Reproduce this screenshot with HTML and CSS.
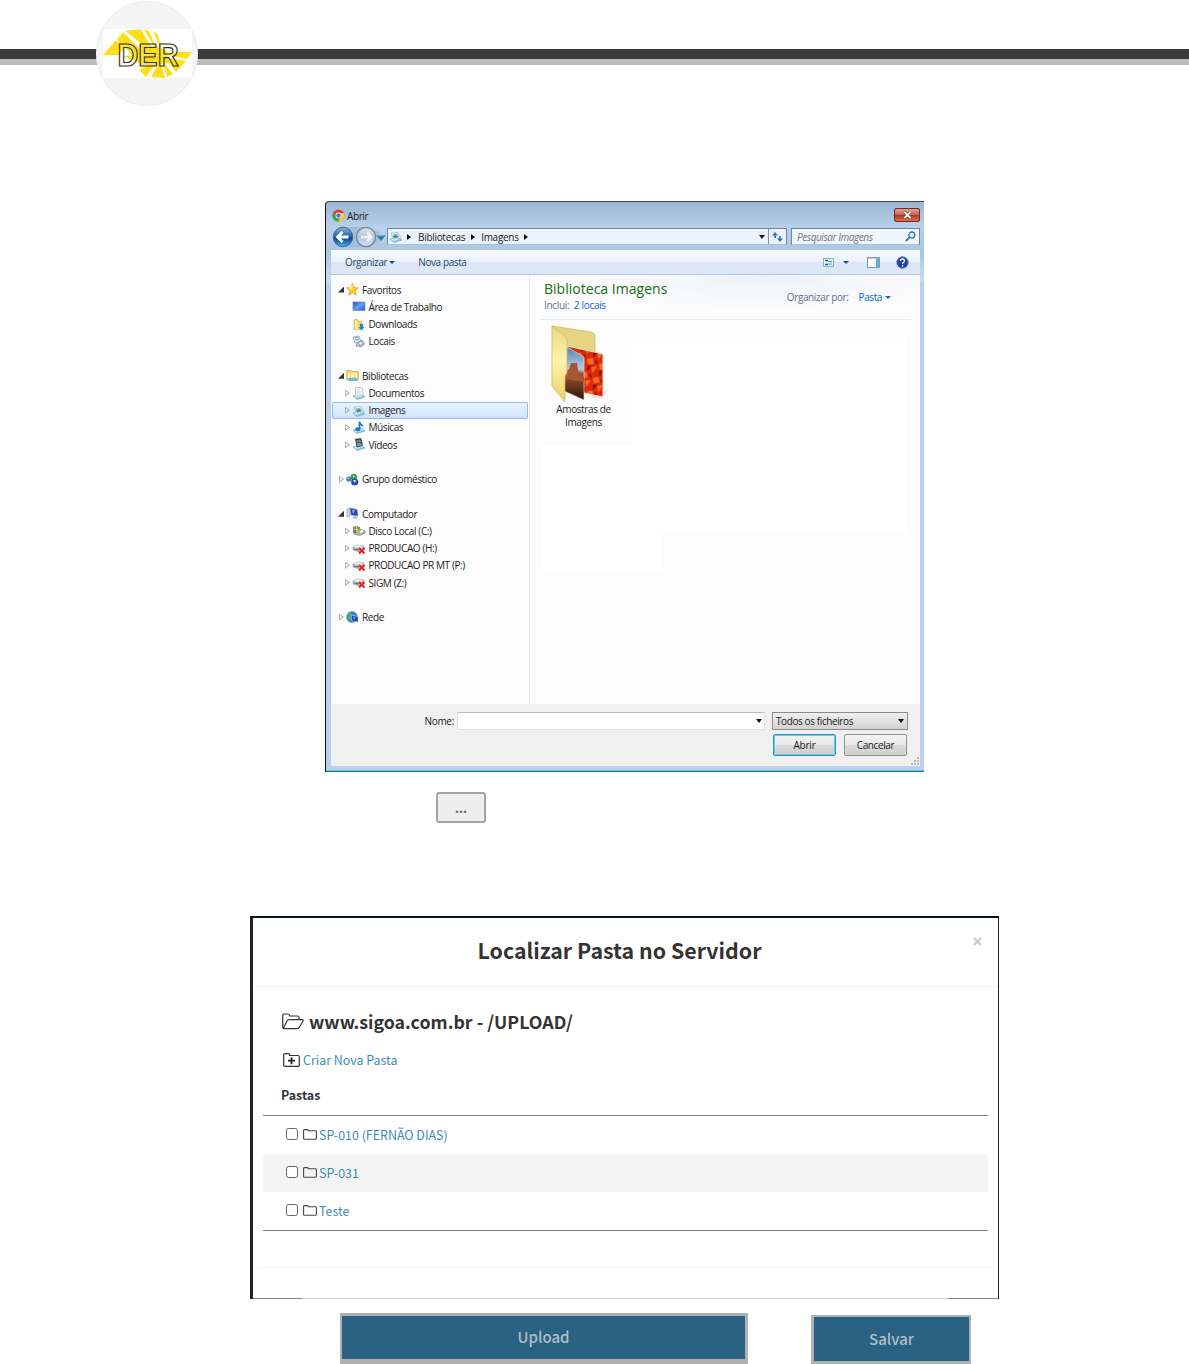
FILE: index.html
```html
<!DOCTYPE html>
<html lang="pt-BR">
<head>
<meta charset="utf-8">
<title>Localizar Pasta no Servidor</title>
<link rel="stylesheet" href="styles.css">
</head>
<body>
<svg class="defs" width="0" height="0">
  <defs>
    <linearGradient id="blueBall" x1="0" y1="0" x2="0" y2="1"><stop offset="0" stop-color="#8fb4de"/><stop offset=".5" stop-color="#1f5cae"/><stop offset=".55" stop-color="#0b3c8c"/><stop offset="1" stop-color="#49b4ee"/></linearGradient>
    <linearGradient id="greyBall" x1="0" y1="0" x2="0" y2="1"><stop offset="0" stop-color="#dfe8f1"/><stop offset=".5" stop-color="#b3c4d6"/><stop offset="1" stop-color="#d5e4f2"/></linearGradient>
    <linearGradient id="screen" x1="0" y1="0" x2="1" y2="1"><stop offset="0" stop-color="#1c48b8"/><stop offset=".5" stop-color="#6d9df0"/><stop offset="1" stop-color="#1d4fc0"/></linearGradient>
    <linearGradient id="flap" x1="0" y1="0" x2="0" y2="1"><stop offset="0" stop-color="#e8d67d"/><stop offset=".45" stop-color="#fdf4ac"/><stop offset="1" stop-color="#edcf68"/></linearGradient>
    <linearGradient id="sky" x1="0" y1="0" x2="0" y2="1"><stop offset="0" stop-color="#4f86bf"/><stop offset=".42" stop-color="#b9cbdc"/><stop offset=".5" stop-color="#a0532f"/><stop offset="1" stop-color="#2c140e"/></linearGradient>
    <pattern id="petals" width="13" height="15" patternUnits="userSpaceOnUse" patternTransform="rotate(24)"><rect width="13" height="15" fill="#d92c0c"/><path d="M0 3L5 0L8 5L3 8zM7 9L12 6L11 14z" fill="#ff6a25"/><path d="M3 9L7 8L5 15zM9 0L12 4L8 3z" fill="#8d1002"/></pattern>
    <symbol id="tray" viewBox="0 0 14 13"><path d="M1 9L9 7L13 10L5 12.500z" fill="#8cc8e8" stroke="#5ca5cf" stroke-width=".6"/><path d="M2 9L9 7.500L11 9L4 11z" fill="#d7effa"/></symbol>
    <symbol id="pic" viewBox="0 0 14 13"><use href="#tray"/><path d="M2 3L9 2.500L12 8L4 9z" fill="#e6f2f8" stroke="#8baabc" stroke-width=".6"/><path d="M3.500 4.500L8 4L10 7L5 8z" fill="#6db4d3"/><path d="M4 6.500L7 5.500L10 7L5 8z" fill="#547e78"/></symbol>
    <symbol id="doc" viewBox="0 0 14 13"><use href="#tray"/><path d="M3 .8L8 .4L10.500 2L11 8L4 9.500z" fill="#fafcfd" stroke="#a3b2bf" stroke-width=".7"/><path d="M5 3h3M5 5h4M5 7h4" stroke="#a4bacb" stroke-width=".7"/></symbol>
    <symbol id="music" viewBox="0 0 14 13"><use href="#tray"/><path d="M7.500 .5V8M7.500 1Q8 3.500 11 5" fill="none" stroke="#167ed0" stroke-width="1.700"/><ellipse cx="5.700" cy="8.200" rx="2.700" ry="2" fill="#167ed0"/></symbol>
    <symbol id="film" viewBox="0 0 14 13"><use href="#tray"/><path d="M3 .8L9.500 .2L11 8L4.500 9.500z" fill="#2e3b47"/><path d="M4.700 2L8.500 1.600L9 4.200L5 4.600z" fill="#9b7767"/><path d="M5 5.300L9 5L9.700 7.500L5.600 8.200z" fill="#6aa4cf"/><path d="M3.800 1.500L4.900 9M9.500 1L10.500 8" stroke="#bac5ce" stroke-width=".6" stroke-dasharray="1 1"/></symbol>
    <symbol id="netdrive" viewBox="0 0 14 13"><path d="M1 5L5 3L12 4L12 8L8 10L1 8z" fill="#b8bcc0" stroke="#878c90" stroke-width=".6"/><path d="M1 5L5 3L12 4L8 6z" fill="#eceeef"/><path d="M2 7L7 8" stroke="#666"/><path d="M7 6L12.500 11.500M12.500 6L7 11.500" stroke="#e12020" stroke-width="1.900"/></symbol>
    <symbol id="folderO" viewBox="0 0 14 11"><path d="M.6 9.500V1.500Q.6 .6 1.500 .6H4.500Q5.200 .6 5.400 1.800H12.500Q13.400 1.800 13.400 2.700V9.500Q13.400 10.300 12.500 10.300H1.500Q.6 10.300 .6 9.500z" fill="none" stroke="#444" stroke-width="1.100"/></symbol>
  </defs>
</svg>

<header class="masthead">
  <div class="rule"></div>
  <div class="seal">
    <svg width="89" height="49" viewBox="0 0 89 49">
      <rect width="89" height="49" fill="#fff"/>
      <g fill="#fcdf18">
        <path d="M0 26L12 12L25 15L16 26z"/><path d="M14 10.500L20 3L47 30L40 37z"/><path d="M22 1.500L38 .5L54 28z"/><path d="M41 .5L46 2L57 27z"/><path d="M50 2L55 6L60 26z"/>
        <path d="M19 27L42 26L52 33L39 37L31 31z"/><path d="M36 41L55 31L43 48z"/><path d="M48 48L57 32L62 49z"/><path d="M59 31L70 45L64 48z"/><path d="M61 28L83 32L73 43z"/><path d="M60 25L75 23L89 23L84 30z"/><path d="M36 16L52 17L64 22L66 34L44 37z"/>
      </g>
      <text x="45" y="36.500" class="seal-text" text-anchor="middle" textLength="61" lengthAdjust="spacingAndGlyphs">DER</text>
    </svg>
  </div>
</header>

<section class="open-dialog">
  <div class="titlebar">
    <svg class="chrome" width="13" height="13" viewBox="0 0 24 24"><circle cx="12" cy="12" r="11" fill="#e23b2e"/><path d="M2.500 6.300A11 11 0 0 0 11 23L16 14L8 14z" fill="#31a350"/><path d="M11 23A11 11 0 0 0 22 7.500H12L16.500 14z" fill="#fbcb1c"/><circle cx="12" cy="12" r="5.500" fill="#fff"/><circle cx="12" cy="12" r="4.200" fill="#3d7de0"/></svg>
    <span>Abrir</span>
    <div class="close"><svg width="9" height="8" viewBox="0 0 9 8"><path d="M1.500 1L7.500 7M7.500 1L1.500 7" stroke="#59251f" stroke-width="3"/><path d="M1.500 1L7.500 7M7.500 1L1.500 7" stroke="#fff" stroke-width="1.800"/></svg></div>
  </div>
  <div class="navbar">
    <svg class="navballs" width="56" height="22" viewBox="0 0 56 22">
      <path d="M10 1H34L48 6V16L34 21H10z" fill="#a5bed8"/>
      <circle cx="12" cy="11" r="9.800" fill="url(#blueBall)" stroke="#426993"/><path d="M17.500 11H7M11.500 6L6.500 11L11.500 16" fill="none" stroke="#fff" stroke-width="2.800"/>
      <circle cx="35" cy="11" r="9.600" fill="url(#greyBall)" stroke="#71869c" stroke-width="1.300"/><path d="M30 11H40M36 6.500L40.500 11L36 15.500" fill="none" stroke="#edf3f8" stroke-width="2.500"/>
      <path d="M46 9.500H54L50 14.500z" fill="#237bb0" stroke="#235f8c" stroke-width=".7"/><path d="M46.500 9.800h7" stroke="#7bd0ee"/>
    </svg>
    <div class="address">
      <svg width="14" height="13"><use href="#pic"/></svg>
      <i class="arrow"></i><span class="crumb-a">Bibliotecas</span><i class="arrow"></i><span class="crumb-b">Imagens</span><i class="arrow"></i>
      <i class="down"></i>
      <div class="refresh"><svg width="11" height="10" viewBox="0 0 11 10"><path d="M3 0L0 3.500H2.300V6H4V3.500H6zM8 10L11 6.500H8.700V4H7V6.500H5z" fill="#2d79bf"/></svg></div>
    </div>
    <div class="search"><span>Pesquisar Imagens</span><svg width="11" height="11" viewBox="0 0 11 11"><circle cx="6.800" cy="4" r="3" fill="#eef6ff" stroke="#3874b5" stroke-width="1.300"/><path d="M4.500 6.300L1 10" stroke="#3874b5" stroke-width="1.900"/></svg></div>
  </div>
  <div class="toolbar">
    <span class="t-org">Organizar</span><i class="down small"></i><span class="t-new">Nova pasta</span>
    <svg class="t-view" width="11" height="9" viewBox="0 0 11 9"><rect x=".5" y=".5" width="10" height="8" fill="#e6f5fc" stroke="#91afc9"/><path d="M2 2.500h3M2 6.500h3" stroke="#1e6396" stroke-width="1.500"/><path d="M5 3.500h4M5 6h4" stroke="#4399a0" stroke-width="1"/></svg>
    <i class="down small"></i>
    <svg class="t-pane" width="13" height="11" viewBox="0 0 13 11"><rect x=".5" y=".5" width="12" height="10" fill="#fff" stroke="#8399b3"/><path d="M.5 1h12" stroke="#8095ac"/><path d="M9 1.500h3.500v9H9z" fill="#65afd1"/></svg>
    <svg class="t-help" width="13" height="13" viewBox="0 0 13 13"><circle cx="6.500" cy="6.500" r="5.900" fill="#1f3fae" stroke="#96a2c3"/><path d="M4.500 5Q4.500 3 6.500 3T8.500 5Q8.500 6 6.600 7V8M6.600 9v1.500" fill="none" stroke="#fff" stroke-width="1.400"/></svg>
  </div>
  <div class="panes">
    <ul class="tree">
      <li class="root open"><i></i><svg width="13" height="13" viewBox="0 0 13 13"><path d="M6.500 .5L8.200 4.500L12.500 4.900L9.200 7.800L10.300 12.200L6.500 9.900L2.700 12.200L3.800 7.800L.5 4.900L4.800 4.500z" fill="#fcc52b" stroke="#e99b35" stroke-width=".7"/><path d="M6.500 2V7L3 5.300z" fill="#fff0a2"/></svg><span>Favoritos</span></li>
      <li class="kid"><i class="none"></i><svg width="14" height="13" viewBox="0 0 14 13"><rect x="1" y="2" width="12" height="8.500" fill="url(#screen)" stroke="#6b8fc9" stroke-width=".7"/></svg><span>Área de Trabalho</span></li>
      <li class="kid"><i class="none"></i><svg width="14" height="13" viewBox="0 0 14 13"><path d="M2 2L5 .8L6 3L10 4V11L3 12L2 11z" fill="#efd070" stroke="#cda647" stroke-width=".6"/><path d="M3 2L5.500 4V12L3 11z" fill="#fff2a6"/><path d="M8 6H11V9H12.500L9.500 12.500L6.500 9H8z" fill="#2384d5"/></svg><span>Downloads</span></li>
      <li class="kid"><i class="none"></i><svg width="14" height="13" viewBox="0 0 14 13"><path d="M1 2L7 1L9 7L3 8z" fill="#e0e8ec" stroke="#839ba9" stroke-width=".7"/><path d="M2.500 3L6.500 2.500M3 5L7 4.500" stroke="#5cb3ca"/><path d="M5 8L10 5L13 9L9 12L4 11z" fill="#bcc5cb" stroke="#76858e" stroke-width=".6"/><circle cx="8.500" cy="8.300" r="1.800" fill="#eef3f5" stroke="#778" stroke-width=".6"/></svg><span>Locais</span></li>
      <li></li>
      <li class="root open"><i></i><svg width="13" height="13" viewBox="0 0 13 13"><path d="M.7 1.500H5L6 2.500H12.300V11H.7z" fill="#f3d87b" stroke="#c6a23d" stroke-width=".7"/><path d="M2 4h2v5H2zM5 4h3v5H5zM9 4h2v5H9z" fill="#fff3b5"/><path d="M2 9L10 8.500L12 12H3z" fill="#6bb9df"/></svg><span>Bibliotecas</span></li>
      <li class="kid"><i></i><svg width="14" height="13"><use href="#doc"/></svg><span>Documentos</span></li>
      <li class="kid selected"><i></i><svg width="14" height="13"><use href="#pic"/></svg><span>Imagens</span></li>
      <li class="kid"><i></i><svg width="14" height="13"><use href="#music"/></svg><span>Músicas</span></li>
      <li class="kid"><i></i><svg width="14" height="13"><use href="#film"/></svg><span>Vídeos</span></li>
      <li></li>
      <li class="root"><i></i><svg width="13" height="13" viewBox="0 0 13 13"><circle cx="2.800" cy="6" r="2.600" fill="#3577c9"/><circle cx="7.800" cy="4" r="3.200" fill="#2fa34b"/><circle cx="8.700" cy="9" r="3.600" fill="#224fac"/><path d="M7 7L10 7L9 10z" fill="#d8edff"/><path d="M7 2L9 3L7 5z" fill="#c5f2c5"/><circle cx="2.500" cy="5.500" r="1" fill="#a7d4ff"/></svg><span>Grupo doméstico</span></li>
      <li></li>
      <li class="root open"><i></i><svg width="13" height="13" viewBox="0 0 13 13"><path d="M1 2L4 1V9L1 10z" fill="#d3dbe1" stroke="#84929c" stroke-width=".6"/><path d="M4 1L11 2.500L12 9L5 8z" fill="#2241bb" stroke="#8797b8" stroke-width=".7"/><path d="M6 2.500L9 3.500L7 7z" fill="#89b5ff"/><path d="M6 10L10 9L12 11L8 12z" fill="#b0bac4"/></svg><span>Computador</span></li>
      <li class="kid"><i></i><svg width="14" height="13" viewBox="0 0 14 13"><path d="M2 8L8 5L13 7V9L8 11.500L2 10z" fill="#a8afb1" stroke="#6d7678" stroke-width=".6"/><path d="M8 8L11 7" stroke="#fff" stroke-width="2"/><path d="M1 3L4 2V5L1 6z" fill="#df672b"/><path d="M4.500 2L8 3V6L4.500 5z" fill="#64ad38"/><path d="M1 6.500L4 5.500V9L1 8.500z" fill="#3478c0"/><path d="M4.500 5.500L7.500 6.500V9L4.500 9z" fill="#dbb72c"/></svg><span>Disco Local (C:)</span></li>
      <li class="kid"><i></i><svg width="14" height="13"><use href="#netdrive"/></svg><span>PRODUCAO (H:)</span></li>
      <li class="kid"><i></i><svg width="14" height="13"><use href="#netdrive"/></svg><span>PRODUCAO PR MT (P:)</span></li>
      <li class="kid"><i></i><svg width="14" height="13"><use href="#netdrive"/></svg><span>SIGM (Z:)</span></li>
      <li></li>
      <li class="root"><i></i><svg width="13" height="13" viewBox="0 0 13 13"><circle cx="6" cy="6" r="5.500" fill="#3283cf" stroke="#7093b5" stroke-width=".6"/><path d="M1 4Q3 1 6 1L4 5L5 9L2 8z" fill="#51b06b"/><path d="M5 4L12 5.500V11L6 10z" fill="#173baa" stroke="#bdcde0" stroke-width=".7"/><path d="M7 5.500L10 6L8 9z" fill="#6da6f3"/></svg><span>Rede</span></li>
    </ul>
    <div class="library">
      <div class="lib-head">
        <div><h1>Biblioteca Imagens</h1><p>Inclui: <a>2 locais</a></p></div>
        <div class="arrange"><span>Organizar por:</span><a>Pasta</a><i class="down small"></i></div>
      </div>
      <div class="lib-grid">
        <figure>
          <svg width="64" height="80" viewBox="0 4 64 80">
            <path d="M40 76L62 68L53 78z" fill="#e8e8e8"/>
            <path d="M5 5L44 11Q48 12 48 15V66L17 70z" fill="#e5d582" stroke="#c9b862" stroke-width=".7"/>
            <path d="M20 25L56 33V76L37 72z" fill="url(#petals)" stroke="#eee1d4"/>
            <path d="M20 26L37 36V79L17 70z" fill="url(#sky)" stroke="#ead7bd" stroke-width=".7"/>
            <path d="M18 52L22 48L24 42L30 42L32 54L37 56V61L18 58z" fill="#a75637"/>
            <path d="M5 5L18 15Q20 17 20 21V52L18 55V81L5 65z" fill="url(#flap)" stroke="#d1b552" stroke-width=".7"/>
          </svg>
          <figcaption>Amostras de<br>Imagens</figcaption>
        </figure>
        <div class="blank b1"></div><div class="blank b2"></div><div class="blank b3"></div>
      </div>
    </div>
  </div>
  <div class="filebar">
    <div class="file-row"><label>Nome:</label><div class="field"><i class="down"></i></div><div class="filter"><span>Todos os ficheiros</span><i class="down"></i></div></div>
    <div class="file-actions"><div class="btn primary">Abrir</div><div class="btn">Cancelar</div></div>
    <svg class="grip" width="8" height="8" viewBox="0 0 8 8" fill="#b9b9b9"><path d="M6 0h2v2H6zM3 3h2v2H3zM6 3h2v2H6zM0 6h2v2H0zM3 6h2v2H3zM6 6h2v2H6z"/></svg>
  </div>
</section>

<div class="browse">...</div>

<section class="modal">
  <div class="modal-head"><h2>Localizar Pasta no Servidor</h2><svg class="x" width="9" height="9" viewBox="0 0 9 9"><path d="M1 1L8 8M8 1L1 8" stroke="#c8c8c8" stroke-width="2"/></svg></div>
  <div class="modal-body">
    <h3><svg width="23" height="17" viewBox="0 0 23 17"><path d="M1.700 14V2.500Q1.700 1 3.200 1H7Q8.500 1 8.500 3H16.500Q18 3 18 4.500V6.500M2.200 15.500L6 8Q6.700 6.700 8 6.700H21Q22.800 6.700 21.800 8.500L18.500 14Q17.500 15.700 15.500 15.700H3.200Q1.700 15.700 1.700 14" fill="none" stroke="#333" stroke-width="1.200"/></svg><span>www.sigoa.com.br - /UPLOAD/</span></h3>
    <a class="new"><svg width="17" height="14" viewBox="0 0 17 14"><path d="M.7 12V2Q.7 .7 2 .7H5.500Q6.700 .7 6.700 2.500H15Q16.300 2.500 16.300 4V12Q16.300 13.300 15 13.300H2Q.7 13.300 .7 12z" fill="none" stroke="#333" stroke-width="1.200"/><path d="M8.500 4.200V11.200M5 7.700H12" stroke="#222" stroke-width="1.800"/></svg><span>Criar Nova Pasta</span></a>
    <h4>Pastas</h4>
    <div class="table">
      <div class="row"><b></b><svg width="14" height="11"><use href="#folderO"/></svg><a>SP-010 (FERNÃO DIAS)</a></div>
      <div class="row alt"><b></b><svg width="14" height="11"><use href="#folderO"/></svg><a>SP-031</a></div>
      <div class="row"><b></b><svg width="14" height="11"><use href="#folderO"/></svg><a>Teste</a></div>
    </div>
  </div>
  <div class="modal-foot"></div>
</section>

<div class="actions"><div class="act upload">Upload</div><div class="act save">Salvar</div></div>
</body>
</html>
```
FILE: styles.css
```css
* { box-sizing: border-box; }
body { margin: 0; width: 1189px; height: 1364px; overflow: hidden; background: #fff; display: flex; flex-direction: column; font-family: "Noto Sans CJK SC", "Open Sans", sans-serif; }
svg { display: block; flex: none; }
svg.defs { position: absolute; }
h1, h2, h3, h4, p, ul, figure { margin: 0; padding: 0; }
i { display: block; flex: none; }

.masthead { position: relative; height: 106px; flex: none; padding-top: 49px; }
.rule { height: 16px; background: linear-gradient(#3c3b3a 10px, #bdbcbf 10px); }
.seal { position: absolute; left: 96px; top: 1px; width: 102px; height: 105px; border-radius: 50%; background: #f5f5f5; box-shadow: inset 0 0 2px #ddd; padding: 28px 0 0 7px; }
.seal-text { font: bold 31px "Liberation Sans", sans-serif; fill: rgba(255, 250, 200, .2); stroke: #34331f; stroke-width: 1.2px; }

/* file picker */
.open-dialog { width: 599px; height: 571px; flex: none; margin: 95px 0 0 325px; display: flex; flex-direction: column; border-top: 1px solid #3d4550; border-left: 1px solid #111; border-bottom: 1px solid #3f6775; border-radius: 4px 0 0 0; padding: 0 4px 5px 5px; box-shadow: inset 0 -1px #43cfee; font: 10px/14px "Open Sans", sans-serif; letter-spacing: -.4px; color: #1b1b1b; background: linear-gradient(#9ab5d2, #b9d1ea 26px, #a9c6e3 50px, #c9dcf0 80px, #b9d1ea 82px); }
.titlebar { height: 26px; display: flex; align-items: center; padding: 0 0 0 1px; flex: none; }
.titlebar span { margin: 1px 0 0 2px; }
.close { margin-left: auto; width: 26px; height: 14px; border: 1px solid #6f2a26; border-radius: 2px; background: linear-gradient(#dda396, #cb6450 48%, #b0351d 50%, #d57154); display: flex; align-items: center; justify-content: center; }
.navbar { height: 22px; display: flex; align-items: flex-start; flex: none; }
.navballs { margin-top: -2px; }
.address { width: 400px; height: 17px; border: 1px solid #70849b; border-bottom-color: #adc0d4; background: #ebf2fb; display: flex; align-items: center; padding-left: 1px; letter-spacing: -.3px; }
.arrow { width: 0; border: 3px solid transparent; border-left: 4px solid #111; border-right: 0; margin-left: 5px; }
.address svg + .arrow { margin-left: 4px; }
.crumb-a { margin: 0 1px 0 7px; }
.crumb-b { margin: 0 0 0 6px; }
.down { width: 0; border: 3.5px solid transparent; border-top: 4px solid #111; border-bottom: 0; }
.down.small { border-width: 3px 3px 0; border-top-color: #284d7a; }
.address > .down { margin-left: auto; border-top-color: #101050; }
.refresh { width: 18px; height: 15px; margin-left: 3px; border-left: 1px solid #8094aa; display: flex; align-items: center; justify-content: center; }
.search { width: 129px; height: 17px; margin-left: 4px; border: 1px solid #70849b; border-bottom-color: #adc0d4; background: #f0f6fd; display: flex; align-items: center; justify-content: space-between; padding: 0 3px 0 5px; font-style: italic; color: #72777d; letter-spacing: -.42px; }
.search span { letter-spacing: -.43px; }
.toolbar { height: 25px; flex: none; display: flex; align-items: center; padding-left: 14px; color: #29486f; background: linear-gradient(#fafcff, #e8f1fc 50%, #dce6f4 52%, #dde8f7); border-bottom: 1px solid #b4c7dc; }
.t-org + .down { margin-left: 2px; }
.t-new { margin-left: 23px; }
.t-view { margin-left: auto; }
.t-view + .down { margin-left: 9px; }
.t-pane { margin-left: 18px; }
.t-help { margin: 0 11px 0 16px; }
.panes { flex: 1; display: flex; background: #fcfcfc; min-height: 0; }
.tree { width: 199px; flex: none; list-style: none; padding-top: 6px; border-right: 1px solid #e6eef7; }
.tree li { height: 17.24px; display: flex; align-items: center; }
.tree li > i { width: 5px; height: 7px; background: #a2a2a2; clip-path: polygon(0 0, 100% 50%, 0 100%, 0 86%, 70% 50%, 15% 18%, 15% 86%, 0 100%); }
.tree li.open > i { width: 6px; height: 6px; background: #333; clip-path: polygon(100% 0, 100% 100%, 0 100%); margin-left: 7px; }
.tree li > i.none { visibility: hidden; }
.root > i { margin: 0 0 0 8px; }
.root > svg { margin: 0 3px 0 2px; }
.kid > i { margin-left: 14px; }
.kid > svg { margin: 0 2.500px 0 2px; }
.tree .selected { margin: 0 1px; border: 1px solid #96bde5; border-radius: 2px; background: linear-gradient(#eaf3ff, #cfe3fd); }
.tree .selected > i { margin-left: 12px; }
.library { flex: 1; display: flex; flex-direction: column; padding: 0 0 0 10px; background: radial-gradient(ellipse at 60% 0, #edf2f9, rgba(252, 252, 252, 0) 60%) 0 0 / 100% 45px no-repeat; }
.lib-head { height: 45px; width: 371px; border-bottom: 1px solid #e3ebf4; display: flex; justify-content: space-between; padding: 4px 20px 0 4px; }
.lib-head h1 { font: 14px/20px "Open Sans", sans-serif; letter-spacing: .02px; color: #156d15; }
.lib-head p { color: #60718a; line-height: 13px; letter-spacing: -.3px; }
.lib-head a { color: #0b66c9; margin-left: 2px; }
.arrange { display: flex; align-items: center; height: 36px; color: #60718a; }
.arrange a { margin-left: 10px; }
.arrange .down { margin-left: 3px; border-top-color: #0b66c9; }
.lib-grid { width: 364px; margin: 5px 0 0 3px; display: grid; grid-template-columns: 89px 29px 246px; grid-template-rows: 12px 109px 87px 38px; }
figure { grid-area: 1 / 1 / 3 / 2; padding-left: 4px; }
figcaption { width: 73px; margin-top: -2px; text-align: center; line-height: 13px; }
.blank { background: #fff; }
.b1 { grid-area: 2 / 2 / 3 / 4; }
.b2 { grid-area: 3 / 1 / 4 / 4; }
.b3 { grid-area: 4 / 1 / 5 / 3; }
.filebar { height: 62px; flex: none; background: #f0f0f0; padding-top: 8px; position: relative; }
.file-row { display: flex; height: 18px; }
.file-row label { width: 123px; text-align: right; line-height: 19px; letter-spacing: -.3px; }
.field { margin-left: 3px; width: 308px; background: #fff; border: 1px solid #e1e5e8; border-top-color: #b7bbc0; display: flex; align-items: center; justify-content: flex-end; padding-right: 2px; }
.filter { margin-left: 7px; width: 136px; border: 1px solid #8c8c8c; background: linear-gradient(#f0f0f0, #d2d2d2); display: flex; align-items: center; justify-content: space-between; padding: 0 3px 0 3px; }
.file-actions { display: flex; gap: 8px; margin: 4px 0 0 442px; }
.btn { width: 63px; height: 22px; border: 1px solid #929292; border-radius: 2px; background: linear-gradient(#f3f3f3, #e9e9e9 48%, #dadada 50%, #cfcfcf); text-align: center; line-height: 20px; }
.btn.primary { border-color: #3c8eb5; box-shadow: inset 0 0 0 1px #5ed0f2; letter-spacing: -.2px; }
.grip { position: absolute; right: 1px; bottom: 1px; }

.browse { width: 50px; height: 31px; flex: none; margin: 20px 0 0 436px; border: 2px solid #a4a4a4; border-radius: 3px; background: #eee; color: #666; font: bold 14px/27px "Open Sans", sans-serif; text-align: center; }

/* server folder modal */
.modal { width: 749px; height: 383px; flex: none; margin: 93px 0 0 250px; border: solid #222; border-width: 2px 1px 0 3px; border-top-color: #06131c; color: #333; display: flex; flex-direction: column; background: linear-gradient(90deg, #888 49px, #ccc 49px, #ccc 695px, #888 695px) 0 100% / 100% 1px no-repeat; }
.modal-head { height: 69px; border-bottom: 1px solid #f1f1f1; display: flex; position: relative; justify-content: center; padding-right: 12px; }
.modal-head h2 { font-size: 21.35px; line-height: 32px; margin-top: 16px; white-space: nowrap; }
.modal-head .x { position: absolute; right: 16px; top: 19px; }
.modal-body { padding: 18px 10px 0; height: 280px; }
.modal-body h3 { display: flex; align-items: center; font-size: 17.75px; line-height: 32px; height: 32px; padding-left: 18px; gap: 5px; white-space: nowrap; }
.new { display: flex; align-items: center; gap: 3px; margin: 14px 0 0 20px; height: 18px; }
a { color: #3c8dbc; }
.modal-body a { font-size: 12.45px; line-height: 18px; }
.modal-body h4 { font-size: 12.4px; line-height: 20px; margin: 16px 0 10px 18px; }
.table { border: solid #828282; border-width: 1px 0; }
.row { height: 38px; display: flex; align-items: center; padding-left: 23px; }
.row.alt { background: #f4f4f4; }
.row b { width: 12px; height: 12px; border: 1px solid #666; border-radius: 2.5px; margin: -3px 5px 0 0; background: #fff; }
.row svg { margin: -1px 2px 0 0; }
.modal-foot { margin: 0 5px 0 4px; border-top: 1px solid #f3f3f3; }

.actions { display: flex; margin: 14px 0 0 340px; align-items: flex-end; gap: 63px; height: 51px; }
.act { background: #2a6283; border: solid #b0b0b0; color: #b2bdc3; font-size: 15px; font-weight: 500; text-align: center; }
.upload { width: 408px; height: 51px; border-width: 3px 3px 5px 2px; line-height: 42px; }
.save { width: 160px; height: 49px; border-width: 2px 2px 3px 3px; line-height: 43px; }
```
